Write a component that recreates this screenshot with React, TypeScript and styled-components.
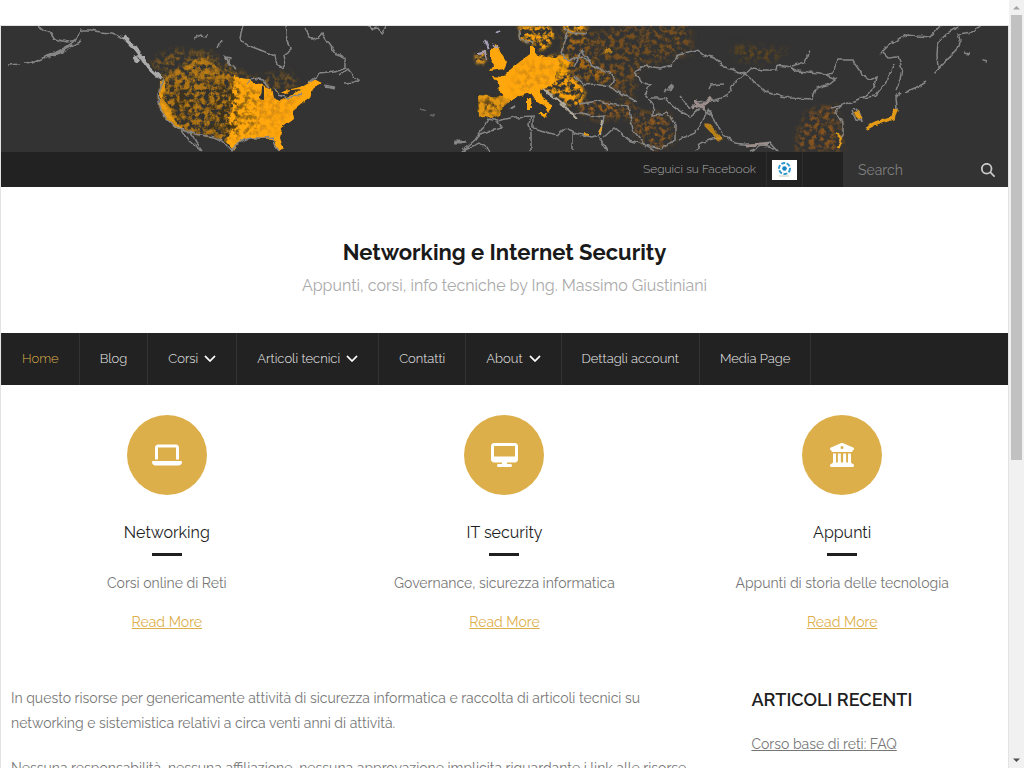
import React from "react";
import styled, { createGlobalStyle } from "styled-components";
import {
  FaBuildingColumns,
  FaChevronDown,
  FaDesktop,
  FaLaptop,
  FaMagnifyingGlass,
} from "react-icons/fa6";

const GlobalStyle = createGlobalStyle`
  * { box-sizing: border-box; }
  body {
    margin: 0;
    background: #fff;
    color: #777;
    font-family: Raleway, Lato, "Open Sans", sans-serif;
    font-size: 14px;
    line-height: 25px;
  }
`;

const Viewport = styled.div`
  display: flex;
  height: 100vh;
  overflow: hidden;
`;

const Site = styled.div`
  flex: 1;
  min-width: 0;
  margin-top: 25px;
  border: 1px solid #e3e3e3;
  border-bottom: 0;
  overflow: hidden;
`;

const ScrollTrack = styled.div`
  width: 15px;
  display: flex;
  flex-direction: column;
  align-items: center;
  background: #f1f1f1;
`;

const ScrollArrow = styled.svg`
  width: 15px;
  height: 15px;
  flex: none;
`;

const ScrollThumb = styled.div`
  width: 11px;
  flex: 0 0 58%;
  background: #c1c1c1;
`;

const ScrollSpace = styled.div`
  flex: 1;
`;

const MapBanner = styled.svg`
  display: block;
  width: 100%;
  height: 126px;
  background: #333333;
`;

const TopBar = styled.div`
  display: flex;
  justify-content: flex-end;
  height: 35px;
  background: #222;
`;

const TopLinks = styled.ul`
  display: flex;
  margin: 0 40px 0 0;
  padding: 0;
  list-style: none;
`;

const TopItem = styled.li<{ $pad: number }>`
  display: flex;
  align-items: center;
  padding: 0 ${(p) => p.$pad}px;
  border-right: 1px solid #2e2e2e;
`;

const TopLink = styled.a`
  display: flex;
  color: #aaa;
  font-size: 12px;
  font-weight: 300;
  text-decoration: none;
`;

const Badge = styled.svg`
  width: 25px;
  height: 20px;
  background: #fff;
`;

const SearchForm = styled.form`
  display: flex;
  align-items: center;
  width: 165px;
  background: #333;
`;

const SearchInput = styled.input`
  flex: 1;
  min-width: 0;
  height: 35px;
  padding: 0 15px;
  border: 0;
  outline: 0;
  background: transparent;
  color: #ccc;
  font: inherit;
  &::placeholder { color: #808080; opacity: 1; }
`;

const SearchButton = styled.button`
  display: flex;
  padding: 0 13px 0 0;
  border: 0;
  background: transparent;
  color: #c9c9c9;
  font-size: 14px;
`;

const Brand = styled.header`
  padding: 49px 20px 31px;
  text-align: center;
`;

const SiteTitle = styled.h1`
  margin: 0;
  color: #1a1a1a;
  font-size: 22px;
  font-weight: 700;
  line-height: 33px;
`;

const Tagline = styled.p`
  margin: 0;
  color: #aaa;
  font-size: 16px;
  line-height: 33px;
`;

const Nav = styled.nav`
  background: #222;
`;

const NavList = styled.ul`
  display: flex;
  margin: 0;
  padding: 0;
  border-left: 1px solid #2b2b2b;
  list-style: none;
`;

const NavItem = styled.li`
  border-right: 1px solid #333;
`;

const NavLink = styled.a<{ $active?: boolean }>`
  display: flex;
  align-items: center;
  gap: 6px;
  height: 52px;
  padding: 0 20px 2px;
  color: ${(p) => (p.$active ? "#ddaf4b" : "#eee")};
  font-size: 13px;
  font-weight: 300;
  text-decoration: none;
  svg {
    color: #fff;
    font-size: 12px;
    stroke: currentColor;
    stroke-width: 14px;
  }
`;

const Features = styled.section`
  display: grid;
  grid-template-columns: repeat(3, 1fr);
  gap: 30px;
  padding: 30px 12px 0;
`;

const Feature = styled.article`
  display: flex;
  flex-direction: column;
  align-items: center;
  text-align: center;
`;

const Disc = styled.div<{ $iconWidth: number }>`
  display: flex;
  align-items: center;
  justify-content: center;
  width: 80px;
  height: 80px;
  border-radius: 50%;
  background: #ddaf4b;
  color: #fff;
  svg { width: ${(p) => p.$iconWidth}px; height: 24px; }
`;

const FeatureTitle = styled.h3`
  margin: 25px 0 8px;
  color: #1f1f1f;
  font-size: 16px;
  font-weight: 400;
`;

const Rule = styled.div`
  width: 30px;
  height: 3px;
  background: #1f1f1f;
`;

const FeatureText = styled.p`
  margin: 15px 0 14px;
`;

const GoldLink = styled.a`
  color: #ddaf4b;
`;

const Columns = styled.div`
  display: grid;
  grid-template-columns: 70fr 25fr;
  gap: 50px;
  padding: 51px 10px 0;
`;

const Paragraph = styled.p`
  margin: 0 0 20px;
`;

const SideTitle = styled.h2`
  margin: 0 0 18px;
  color: #1f1f1f;
  font-size: 18px;
  font-weight: 600;
  line-height: 28px;
`;

const SideLink = styled.a`
  color: #777;
`;

const navItems = [
  { label: "Home", active: true },
  { label: "Blog" },
  { label: "Corsi", menu: true },
  { label: "Articoli tecnici", menu: true },
  { label: "Contatti" },
  { label: "About", menu: true },
  { label: "Dettagli account" },
  { label: "Media Page" },
];

const features = [
  { icon: <FaLaptop />, width: 30, title: "Networking", text: "Corsi online di Reti" },
  { icon: <FaDesktop />, width: 27, title: "IT security", text: "Governance, sicurezza informatica" },
  { icon: <FaBuildingColumns />, width: 24, title: "Appunti", text: "Appunti di storia delle tecnologia" },
];

const coasts = [
  // Alaska, Aleutians and the Pacific coast
  "M8 65L20 64M25 63L33 62L45 57L55 53L66 47L73 42L78 36L82 30L92 30L100 32L112 33L120 36L128 41L134 48L141 56L148 66L158 75L163 79L158 95L160 108L166 118L173 125L180 129L188 140L201 151",
  "M38 26L44 31L51 33L55 39L67 42L76 40M72 46L80 42",
  // Mexican border and gulf
  "M180 129L195 134L213 137L222 141L228 148L233 151L237 143L250 138L265 138L273 137L274 144L279 151M190 133L196 143L202 151",
  // Hudson Bay and the Canadian east
  "M243 26L240 38L245 44L255 48L268 53L275 56L277 65L282 68L285 62L284 54L291 49L288 40L286 26",
  "M305 29L312 40L318 38L322 33L330 45L337 55L346 58L346 68L335 72L320 74L309 83",
  "M223 56L230 58L228 63L236 69M218 48L221 41M194 38L201 35L207 36",
  "M248 83L254 78L263 80L269 87M275 89L278 95L288 98L301 94",
  "M367 26L373 29L378 28L382 34L386 26M339 76L348 69L358 82L344 83",
  // North Africa
  "M462 151L475 140L482 130L488 119L497 121L515 117L533 116L533 128L545 131L557 136L565 129L578 134L592 137L598 135L604 122L605 116L594 117L583 113L570 113L560 103",
  "M531 116L529 124L531 133V151M573 133V151M462 151L479 143L490 151M478 136L490 131L502 128L496 121M598 136L608 151M604 137L614 128L629 140L642 144L655 151",
  // Baltic, eastern Europe and the Black Sea
  "M518 28L520 40L533 43M568 32L561 53L568 61L583 57L592 66L610 73L615 80L609 86M574 66L582 50L592 66M575 76L585 85L595 84L610 87L625 96L637 102M580 104L598 101L616 105L628 106M565 29L573 33L588 34",
  // Caspian region and Iran
  "M635 72L645 66L660 68L672 65L678 55L697 51L707 56L715 58L725 67L745 74M635 72L642 82L650 85L645 95L653 105L652 115L668 113L675 125L675 140L660 149L645 145L633 130L628 106M650 98L664 98L676 108L690 117L700 110M664 92L672 84",
  // Central Asia and Mongolia
  "M745 74L752 68L763 70L777 70L778 65L790 67L797 71L820 73L826 75L832 73L838 60L852 60L862 74L870 80L877 77L875 86L862 98L842 105L832 108",
  "M745 74L757 84L765 92L790 98L812 99L815 88L830 84L836 79L826 75M745 74L735 82L727 96L715 100L698 102L690 108L680 96M708 89L710 85L723 84M792 66L805 62L809 51",
  "M680 139L693 134L702 121L708 110L715 122L724 135L735 143L750 145L770 142L778 151M697 151L699 144L712 139L722 138M695 113L702 107L710 116M750 151L762 146L774 148",
  // Chinese coast, Korea and the far east
  "M842 105L835 112L843 122L843 135L838 148M853 108L860 113L862 121L856 120L852 111M865 128L875 123L893 117L897 108L896 98L900 92",
  "M898 56L902 68L900 80L896 90M894 64L887 81L875 96L862 98M882 52L888 58L897 57M880 54L890 44L905 35L930 37L940 26",
  "M958 27L949 32L938 42L937 55L938 68M979 26L973 32L958 34L960 40L955 52L945 62L934 74M926 82L918 87L905 93M964 53L970 54M982 61L987 62",
];

function WorldMap() {
  return (
    <MapBanner viewBox="1 26 1007 126" preserveAspectRatio="xMidYMid slice" role="img" aria-label="World map">
      <defs>
        <filter id="patchy" x="-0.1" y="-0.1" width="1.2" height="1.2">
          <feTurbulence type="fractalNoise" baseFrequency="0.2" numOctaves="4" seed="8" />
          <feColorMatrix values="0 0 0 0 0  0 0 0 0 0  0 0 0 0 0  4.5 0 0 0 -1.75" result="spots" />
          <feGaussianBlur in="SourceGraphic" stdDeviation="1.5" />
          <feComposite in2="spots" operator="in" />
          <feGaussianBlur stdDeviation="0.6" />
        </filter>
        <filter id="dusty" x="-0.1" y="-0.1" width="1.2" height="1.2">
          <feTurbulence type="fractalNoise" baseFrequency="0.2" numOctaves="4" seed="3" />
          <feColorMatrix values="0 0 0 0 0  0 0 0 0 0  0 0 0 0 0  4 0 0 0 -1.7" result="spots" />
          <feGaussianBlur in="SourceGraphic" stdDeviation="3.5" />
          <feComposite in2="spots" operator="in" />
          <feGaussianBlur stdDeviation="0.7" />
        </filter>
        <filter id="ragged" x="-0.1" y="-0.1" width="1.2" height="1.2">
          <feTurbulence type="fractalNoise" baseFrequency="0.14" numOctaves="2" seed="5" />
          <feDisplacementMap in="SourceGraphic" scale="5" xChannelSelector="R" yChannelSelector="G" />
          <feGaussianBlur stdDeviation="0.7" />
        </filter>
      </defs>
      {/* thinly lit regions */}
      <g filter="url(#dusty)">
        <path d="M150 62L175 50L210 52L240 72L265 83L262 76L290 73L300 86L260 90L165 78Z" fill="#b5770f" opacity=".6" />
        <path d="M575 40L620 26L690 24L692 52L640 66L632 98L600 82L575 78Z" fill="#a0610c" opacity=".6" />
        <path d="M628 106L652 115L668 113L675 140L660 149L645 145L633 130Z" fill="#c4700c" opacity=".6" />
        <path d="M580 102L630 102L632 115L600 119L580 114Z" fill="#c4700c" opacity=".75" />
        <path d="M730 44L790 50L770 62L738 60Z" fill="#a06510" opacity=".4" />
        <path d="M808 112L834 104L842 125L842 151H795L800 128Z" fill="#b9680c" opacity=".6" />
        <path d="M561 30L590 26L588 44L566 56ZM560 50L588 60L608 72L615 82L600 83L570 76Z" fill="#c4780c" opacity=".7" />
      </g>
      {/* western United States */}
      <path d="M164 80L200 76L236 78V143L222 141L213 137L195 134L180 129L166 118L160 108L159 95Z" fill="#6b4b1a" opacity=".5" filter="url(#patchy)" />
      <g filter="url(#patchy)">
        <path d="M163 76L185 66L190 55L205 57L238 76V143L222 141L213 137L195 134L180 129L166 118L160 108L158 95Z" fill="#d38a10" opacity=".75" />
        <path d="M518 26L520 40L530 43L538 50L545 50L552 42L555 33L548 26ZM563 24H583L586 31L570 34L563 32Z" fill="#f59f0a" />
        <path d="M475 53L484 50L487 57L484 65L475 63Z" fill="#d9921a" />
        <path d="M547 56L567 54L571 62L569 74L577 80L586 92L580 106L570 106L560 98L548 92L542 86Z" fill="#f59f0a" />
      </g>
      <g filter="url(#ragged)" fill="#ffa70b">
        <path d="M234 76L250 80L267 87L280 92L300 88L316 79L322 82L313 89L310 97L303 102L293 110L294 119L282 128L280 138L284 150L278 151L274 139L250 138L238 143L234 151L226 142L231 132L228 120L233 108L229 98L233 88Z" />
        <path d="M160 82L164 80L166 90L162 98L170 107L174 119L182 129L176 128L165 118L160 108Z" opacity=".8" />
        <path d="M478 95L503 97L512 99L503 107L500 115L491 118L484 116L479 117Z" opacity=".85" />
        <path d="M492 76L503 77L512 68L522 60L530 54V45H535V54L545 57L556 58L560 62L556 72L554 84L545 88L540 91L544 100L553 106L549 113L545 106L534 99L530 93L520 96L512 100L503 97L500 92L499 84Z" />
        <path d="M556 58L567 56L570 63L566 74L556 80Z" opacity=".55" />
        <path d="M491 49L497 44L500 51L507 62L504 69L490 71L494 65L491 60ZM527 98H531L532 109H527ZM538 113L547 113L545 118Z" />
      </g>
      <g filter="url(#dusty)" fill="#3d301a">
        <path d="M163 90L182 86L195 103L192 121L176 119ZM480 98L502 99L498 114L482 114ZM205 83L238 82L238 135L212 134Z" opacity=".9" />
        <path d="M228 84L258 90L256 134L230 138Z" opacity=".5" />
        <path d="M256 92L300 92L290 112L275 134L256 134ZM520 62L556 60L550 86L510 94Z" opacity=".18" />
      </g>
      <g fill="#333" filter="url(#ragged)">
        <path d="M261 87L264 86V100L260 99ZM271 88L278 92L286 94L290 91L301 90L280 101L273 98ZM249 79L260 79L265 84L256 83Z" />
        <path d="M586 97L594 86L607 89L622 97L614 102L600 99L590 102Z" />
      </g>
      <g filter="url(#ragged)" fill="none" stroke="#868686" strokeWidth="1.5">
        {coasts.map((d) => (
          <path key={d} d={d} />
        ))}
        <path d="M124 37L134 47L142 58L150 69L161 79M135 56L139 63" stroke="#aaa" strokeWidth="4" />
        <path d="M485 40L489 50M497 33L500 31M493 44L498 48M478 54L485 52L487 60" stroke="#a9a0b8" strokeWidth="2" />
        <path d="M560 104L568 110L577 118M543 89L556 98L566 106M603 120L600 135" stroke="#b4aa9a" strokeWidth="2" />
        <path d="M47 56L60 52L73 45M325 86L335 88M669 91L673 85M454 142L467 142M511 109L516 106M225 58L231 66" strokeWidth="3" />
        <path d="M421 110L425 111M431 114L434 115" strokeWidth="2" opacity=".6" />
        <path d="M692 108L705 104L712 98M745 145L768 144M695 100L704 110" stroke="#9b8e8a" strokeWidth="3" />
      </g>
      <g filter="url(#ragged)" fill="none" stroke="#e39a14">
        <path d="M866 128L876 123L893 118L896 108" strokeWidth="4" />
        <path d="M856 112L861 119" strokeWidth="5" />
        <path d="M706 124L721 140" strokeWidth="5" opacity=".75" />
        <path d="M836 133L842 138L838 148M584 134L590 135M599 134L603 126" strokeWidth="2" />
        <path d="M605 50L612 53" strokeWidth="4" opacity=".7" />
      </g>
    </MapBanner>
  );
}

export default function App() {
  return (
    <>
      <GlobalStyle />
      <Viewport>
        <Site>
          <WorldMap />
          <TopBar>
            <TopLinks>
              <TopItem $pad={10}>
                <TopLink href="#facebook">Seguici su Facebook</TopLink>
              </TopItem>
              <TopItem $pad={5}>
                <TopLink href="#profile" aria-label="Facebook page">
                  <Badge viewBox="0 0 25 20">
                    <circle cx="12.5" cy="8.5" r="5.5" fill="none" stroke="#3299cf" strokeWidth="2" strokeDasharray="4 1.5" />
                    <circle cx="12.5" cy="8.5" r="2.3" fill="#1683c2" />
                    <path d="M7 16H17" stroke="#c6cdb8" strokeWidth="1" />
                  </Badge>
                </TopLink>
              </TopItem>
            </TopLinks>
            <SearchForm role="search">
              <SearchInput type="text" placeholder="Search" aria-label="Search" />
              <SearchButton type="button" aria-label="Submit search">
                <FaMagnifyingGlass />
              </SearchButton>
            </SearchForm>
          </TopBar>
          <Brand>
            <SiteTitle>Networking e Internet Security</SiteTitle>
            <Tagline>Appunti, corsi, info tecniche by Ing. Massimo Giustiniani</Tagline>
          </Brand>
          <Nav>
            <NavList>
              {navItems.map((item) => (
                <NavItem key={item.label}>
                  <NavLink href="#" $active={item.active}>
                    {item.label}
                    {item.menu && <FaChevronDown />}
                  </NavLink>
                </NavItem>
              ))}
            </NavList>
          </Nav>
          <Features>
            {features.map((f) => (
              <Feature key={f.title}>
                <Disc $iconWidth={f.width}>{f.icon}</Disc>
                <FeatureTitle>{f.title}</FeatureTitle>
                <Rule />
                <FeatureText>{f.text}</FeatureText>
                <GoldLink href="#">Read More</GoldLink>
              </Feature>
            ))}
          </Features>
          <Columns>
            <main>
              <Paragraph>
                In questo risorse per genericamente attività di sicurezza informatica e raccolta di articoli tecnici su
                networking e sistemistica relativi a circa venti anni di attività.
              </Paragraph>
              <Paragraph>
                Nessuna responsabilità, nessuna affiliazione, nessuna approvazione implicita riguardante i link alle risorse
              </Paragraph>
            </main>
            <aside>
              <SideTitle>ARTICOLI RECENTI</SideTitle>
              <SideLink href="#">Corso base di reti: FAQ</SideLink>
            </aside>
          </Columns>
        </Site>
        <ScrollTrack aria-hidden="true">
          <ScrollArrow viewBox="0 0 15 15">
            <path d="M4 9.5L7.5 6L11 9.5Z" fill="#a3a3a3" />
          </ScrollArrow>
          <ScrollThumb />
          <ScrollSpace />
          <ScrollArrow viewBox="0 0 15 15">
            <path d="M4 5.5L7.5 9L11 5.5Z" fill="#505050" />
          </ScrollArrow>
        </ScrollTrack>
      </Viewport>
    </>
  );
}
